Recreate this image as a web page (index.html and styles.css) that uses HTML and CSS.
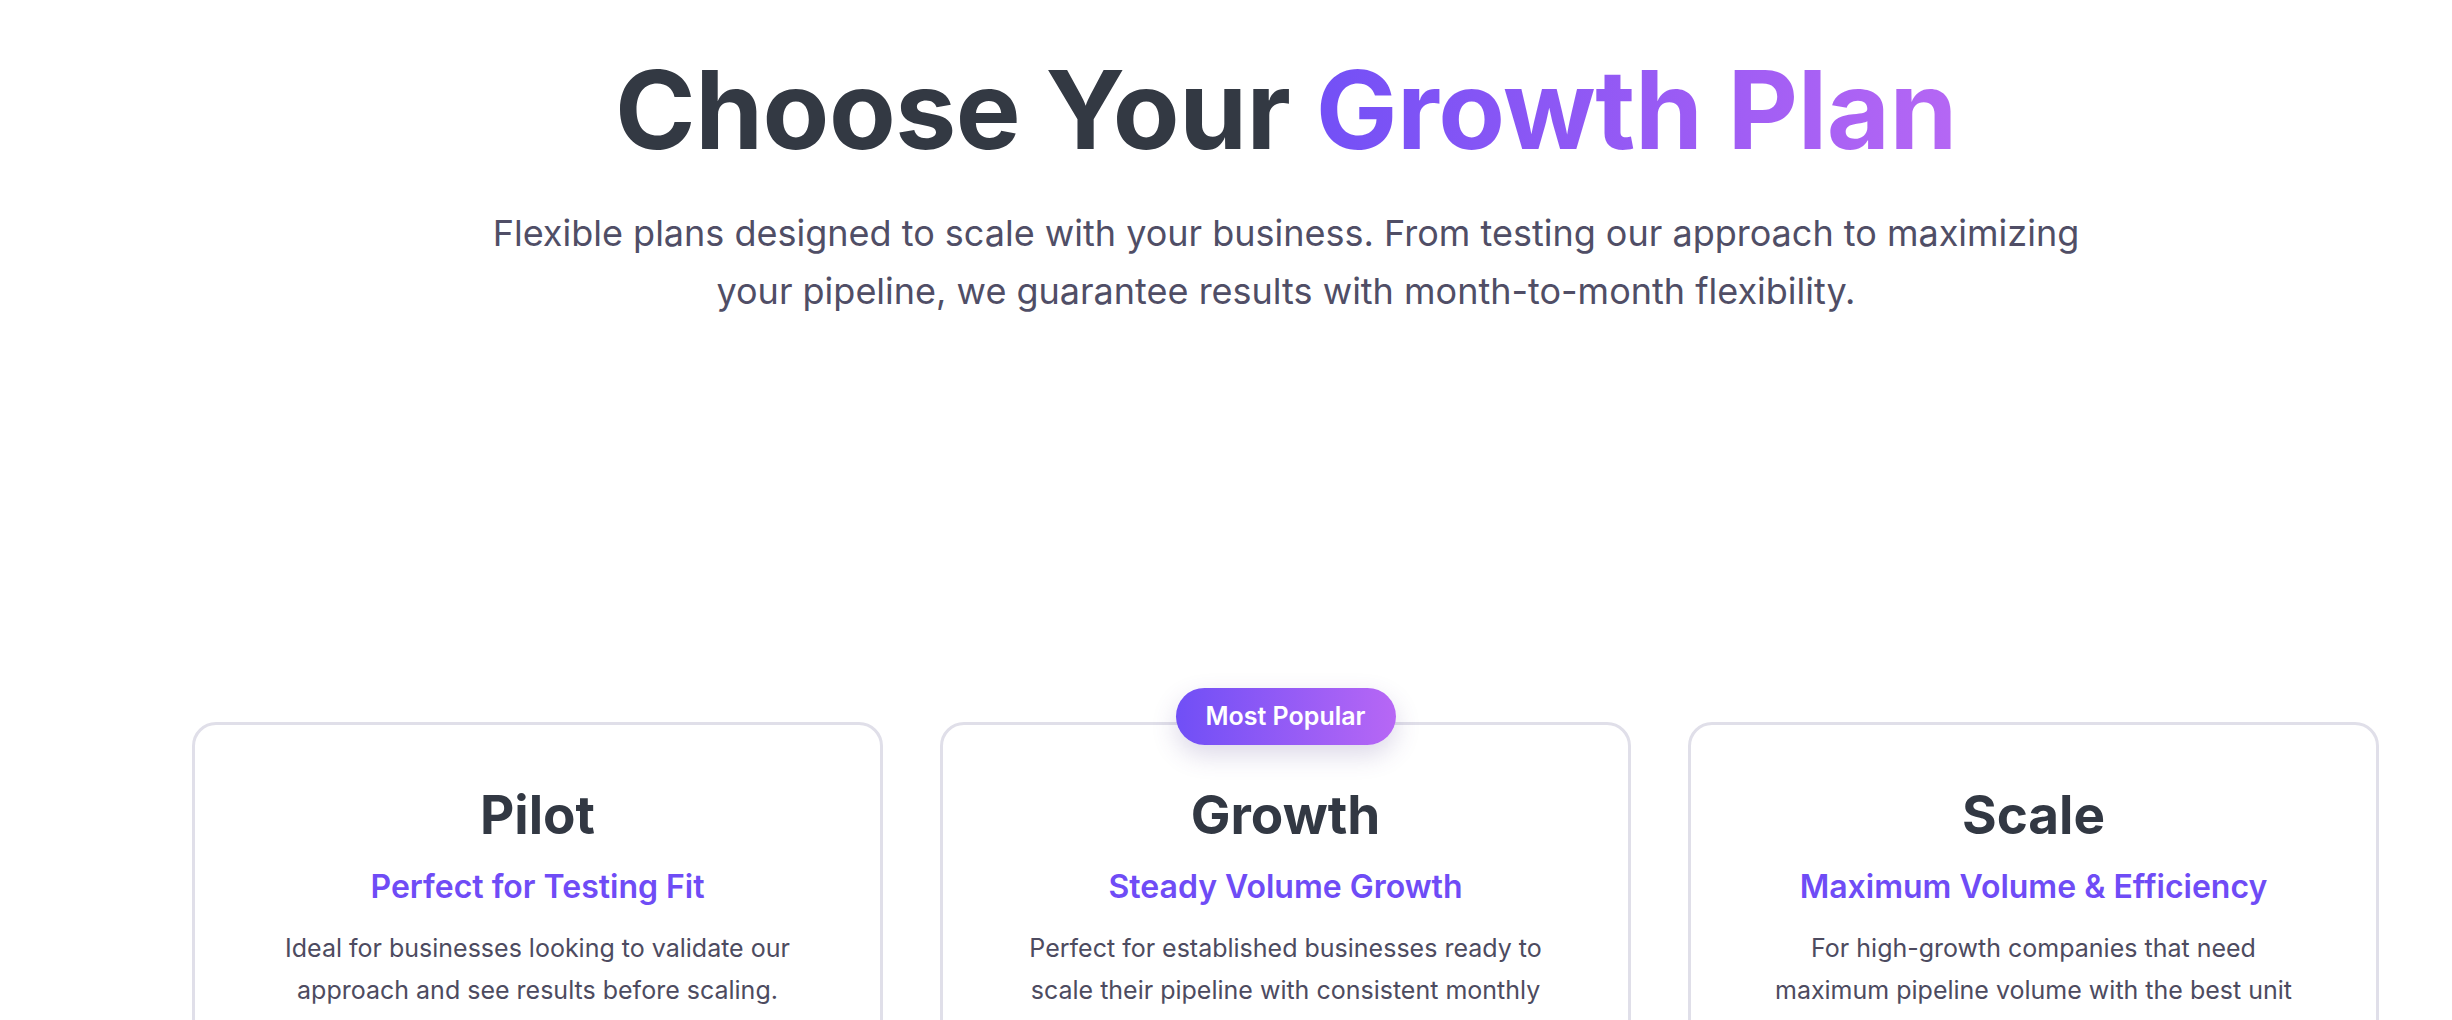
FILE: index.html
```html
<!DOCTYPE html>
<html lang="en">
<head>
<meta charset="utf-8">
<title>Choose Your Growth Plan</title>
<link rel="stylesheet" href="styles.css">
</head>
<body>
<main class="page">
  <header class="hero">
    <h1 class="hero-title">Choose Your <span class="accent">Growth Plan</span></h1>
    <p class="hero-sub">Flexible plans designed to scale with your business. From testing our approach to maximizing your pipeline, we guarantee results with month-to-month flexibility.</p>
  </header>
  <section class="plans">
    <article class="plan">
      <h2 class="plan-name">Pilot</h2>
      <p class="plan-tag">Perfect for Testing Fit</p>
      <p class="plan-desc">Ideal for businesses looking to validate our approach and see results before scaling.</p>
    </article>
    <article class="plan plan-featured">
      <span class="badge">Most Popular</span>
      <h2 class="plan-name">Growth</h2>
      <p class="plan-tag">Steady Volume Growth</p>
      <p class="plan-desc">Perfect for established businesses ready to scale their pipeline with consistent monthly results.</p>
    </article>
    <article class="plan">
      <h2 class="plan-name">Scale</h2>
      <p class="plan-tag">Maximum Volume &amp; Efficiency</p>
      <p class="plan-desc">For high-growth companies that need maximum pipeline volume with the best unit economics.</p>
    </article>
  </section>
</main>
</body>
</html>
```
FILE: styles.css
```css
* { box-sizing: border-box; }
html, body { margin: 0; padding: 0; background: #ffffff; }
body {
  font-family: Inter, "Noto Sans", "Liberation Sans", sans-serif;
  color: #333943;
}
.page {
  padding-left: 120px;
}
.hero {
  padding-top: 52px;
  text-align: center;
}
.hero-title {
  margin: 0;
  font-size: 109px;
  line-height: 114px;
  font-weight: 700;
  letter-spacing: -0.5px;
  color: #333943;
}
.accent {
  background: linear-gradient(90deg, #7350f6 0%, #9d5cf4 60%, #b567f4 100%);
  -webkit-background-clip: text;
  background-clip: text;
  color: transparent;
}
.hero-sub {
  margin: 39px auto 0;
  max-width: 1640px;
  font-size: 36px;
  line-height: 1.6;
  color: #504e66;
}
.plans {
  display: grid;
  grid-template-columns: repeat(3, 1fr);
  gap: 57px;
  margin: 0 73px 0 72px;
  padding-top: 402px;
}
.plan {
  position: relative;
  min-height: 700px;
  border: 3px solid #e0dfe9;
  border-radius: 24px;
  padding: 59px 40px 48px;
  text-align: center;
  background: #fff;
}
.plan-name {
  margin: 0;
  font-size: 53px;
  line-height: 62px;
  font-weight: 700;
  color: #323843;
}
.plan-tag {
  margin: 21px 0 0;
  font-size: 32px;
  line-height: 40px;
  font-weight: 600;
  color: #6f4cf6;
}
.plan-desc {
  margin: 20px auto 0;
  max-width: 560px;
  font-size: 25px;
  line-height: 42px;
  color: #4d4b60;
}
.badge {
  position: absolute;
  top: 0;
  left: 50%;
  transform: translate(-50%, -65%);
  padding: 13px 30px;
  border-radius: 999px;
  background: linear-gradient(90deg, #704ff6 0%, #b767f5 100%);
  color: #fff;
  font-size: 25px;
  line-height: 31px;
  font-weight: 600;
  white-space: nowrap;
  box-shadow: 0 10px 26px rgba(80, 60, 140, 0.2);
}
```
